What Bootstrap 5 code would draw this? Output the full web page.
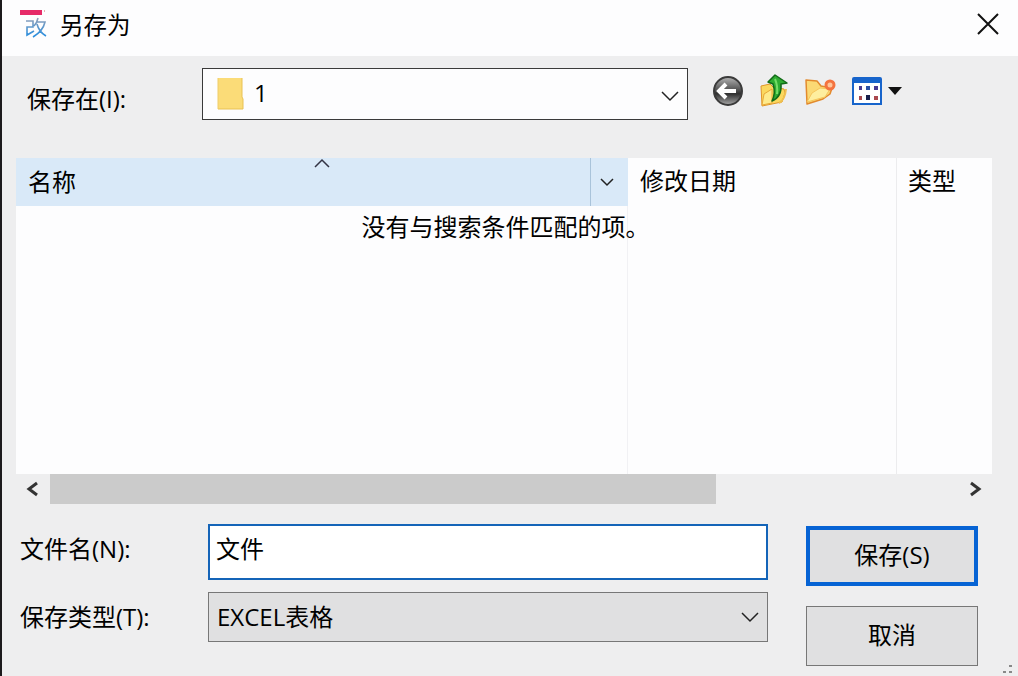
<!DOCTYPE html>
<html lang="zh-CN">
<head>
<meta charset="utf-8">
<meta name="viewport" content="width=device-width, initial-scale=1">
<title>另存为</title>
<link href="https://cdn.jsdelivr.net/npm/bootstrap@5.3.0/dist/css/bootstrap.min.css" rel="stylesheet">
<style>
  body { font-family: "Open Sans", "Noto Sans CJK SC", sans-serif; font-size: 24px; line-height: 32px; color: #000; background: #eeeeef; }
  .dialog { border-left: 2px solid #1c1a1c; }
  .titlebar { height: 56px; background: #fdfdfe; padding: 0 14px 6px 18px; }
  .icon-btn { background: none; border: 0; padding: 0; line-height: 0; color: #111; }
  .place-row { padding: 12px 0 0 25px; }
  .place-label { width: 175px; padding-top: 15px; }
  .place-tools { width: 330px; padding-left: 24px; height: 46px; }
  .win-select { border-radius: 0; font-size: 24px; line-height: 32px; color: #000; border: 1px solid #777;
    background-image: url("data:image/svg+xml,%3Csvg xmlns='http://www.w3.org/2000/svg' viewBox='0 0 18 18'%3E%3Cpath d='M1 5l8 8 8-8' fill='none' stroke='%23222' stroke-width='1.5'/%3E%3C/svg%3E");
    background-position: right 8px center; background-size: 18px 18px; }
  .place-select { height: 52px; padding: 8px 40px 10px 51px; background-color: #fdfdfe; border-color: #3a3a3a; background-position: right 8px top 18px; }
  .folder { left: 15px; top: 9px; }
  .file-area { margin: 38px 26px 0 14px; }
  .file-pane { min-height: 316px; background:
    linear-gradient(#ececee, #ececee) right 95px top / 1px 100% no-repeat,
    linear-gradient(#f1f1f4, #f1f1f4) right 364px top / 1px 100% no-repeat, #fdfdfe; }
  .file-table { table-layout: fixed; width: 100%; }
  .file-table th { height: 48px; font-weight: 400; padding: 0 12px 2px; }
  .file-table .sorted { background: #d9e9f8; padding: 0 0 0 12px; }
  .sort-mark { left: 50%; top: 0; transform: translateX(-50%); line-height: 0; }
  .filter-btn { width: 38px; height: 48px; padding-right: 6px; border-left: 1px solid #a9c3da; }
  .col-date { width: 268px; }
  .col-kind { width: 96px; }
  .empty-note { padding: 5px 0 0 3px; }
  .scroll-row { height: 30px; }
  .scroll-row button { width: 34px; }
  .thumb { background: #cbcbcb; }
  .save-area { padding: 20px 40px 0 18px; gap: 38px; }
  .field-label { width: 188px; }
  .name-label { padding-bottom: 6px; }
  .name-input { height: 56px; border: 2px solid #1464b8; border-radius: 0; padding: 0 6px 10px; font-size: 24px; line-height: 32px; color: #000; background: #fff; }
  .name-input:focus { border-color: #1464b8; box-shadow: none; }
  .type-select { height: 50px; padding: 8px 40px 8px 8px; background-color: #e0e0e1; }
  .actions { width: 172px; padding-top: 2px; gap: 20px; }
  .win-btn { height: 60px; border-radius: 0; font-size: 24px; line-height: 32px; color: #000; background: #e0e0e1; border: 1px solid #777; padding: 0 0 2px; }
  .win-btn.is-default { border: 4px solid #0663d4; }
  .grip { right: 4px; bottom: 0; }
</style>
</head>
<body>
<main class="dialog min-vh-100 position-relative">
  <header class="titlebar d-flex align-items-center">
    <svg width="28" height="30" viewBox="0 0 28 30" aria-hidden="true">
      <defs><linearGradient id="ink" x1="0" y1="0" x2="0" y2="1"><stop offset="0" stop-color="#91a0b8"/><stop offset="1" stop-color="#258de0"/></linearGradient></defs>
      <path d="M0 0h22v5H0z" fill="#e62b68"/><path d="M24 1h1" stroke="#c66"/>
      <path d="M6 11h7v6H7v8l7-4M18 8q-1 5-4 8M17 12h8q-2 9-12 15M17 14q2 8 9 12" fill="none" stroke="url(#ink)" stroke-width="1.6"/>
    </svg>
    <h1 class="h4 fw-normal mb-0 ms-2 ps-1 flex-grow-1">另存为</h1>
    <button type="button" class="icon-btn" aria-label="关闭">
      <svg width="32" height="32" viewBox="0 0 32 32"><path d="M6 5l20 20M26 5L6 25" stroke="#111" stroke-width="2"/></svg>
    </button>
  </header>

  <section class="place-row d-flex">
    <label class="place-label" for="place">保存在(I):</label>
    <div class="position-relative flex-grow-1">
      <select id="place" class="form-select win-select place-select"><option>1</option></select>
      <svg class="folder position-absolute pe-none" width="28" height="34" viewBox="0 0 28 34" aria-hidden="true">
        <path d="M1 1h24v19l1 2v10H1z" fill="#fbdc78"/><path d="M1 32h25V22l-1-2V1" fill="none" stroke="#e9c252"/><path d="M1 1v31" stroke="#efcc68"/>
      </svg>
    </div>
    <div class="place-tools d-flex align-items-center">
      <button type="button" class="icon-btn" aria-label="后退">
        <svg width="32" height="32" viewBox="0 0 32 32">
          <defs><linearGradient id="steel" x1="0" y1="0" x2="0" y2="1"><stop offset="0" stop-color="#b4b4b4"/><stop offset=".45" stop-color="#555"/><stop offset=".6" stop-color="#303030"/><stop offset="1" stop-color="#aaa"/></linearGradient></defs>
          <circle cx="16" cy="16" r="14" fill="url(#steel)" stroke="#3a3a3a" stroke-width="2"/>
          <path d="M14 9l-7 7 7 7M8 16h16" fill="none" stroke="#fff" stroke-width="4"/>
        </svg>
      </button>
      <button type="button" class="icon-btn ms-3" aria-label="向上一级">
        <svg width="28" height="34" viewBox="0 0 28 34">
          <path d="M1 12l9-2 3 3 11 2 1 4-3 9-20 4z" fill="#fbd85f" stroke="#e0962a"/>
          <path d="M2 31l2-11 8-5v14z" fill="#feea8c" stroke="#e8a838"/>
          <path d="M19 29q6-3 7-14" fill="none" stroke="#f0c050" stroke-width="2"/>
          <path d="M15 1L8 8l5 2q3 9-1 17 10-4 9-17l6-1z" fill="#2fac32" stroke="#126b18" stroke-width="1.5" stroke-linejoin="round"/>
          <path d="M15 5q3 7 2 15" fill="none" stroke="#75dc67" stroke-width="2"/>
        </svg>
      </button>
      <button type="button" class="icon-btn ms-3" aria-label="新建文件夹">
        <svg width="32" height="30" viewBox="0 0 32 30">
          <path d="M2 4l11 1 4 5 11 2-2 6-7 5-16 5z" fill="#fbd974" stroke="#e28a2d" stroke-width="1.5" stroke-linejoin="round"/>
          <path d="M3 26l5-9 8-5 10 1-5 8z" fill="#feee9e" stroke="#f5c65c"/>
          <circle cx="26" cy="9" r="4" fill="#ffc59a" stroke="#f4733f" stroke-width="3"/>
        </svg>
      </button>
      <button type="button" class="icon-btn d-flex align-items-center ms-3" aria-label="查看菜单">
        <svg width="30" height="28" viewBox="0 0 30 28">
          <path d="M1 2q0-1 1-1h26q1 0 1 1v25H1z" fill="#fff" stroke="#1764cb" stroke-width="2"/><path d="M1 1h28v5H1z" fill="#1764cb"/>
          <path d="M7 9h3v4H7zM22 9h4v4h-4z" fill="#493a92"/><path d="M14 9h4v4h-4z" fill="#2850a4"/>
          <path d="M7 19h3v4H7zM22 19h4v4h-4z" fill="#aa484e"/><path d="M14 18h4v5h-4z" fill="#17204b"/>
        </svg>
        <svg class="ms-1" width="16" height="8" viewBox="0 0 16 8"><path d="M2 0h14L9 8z" fill="#111"/></svg>
      </button>
    </div>
  </section>

  <section class="file-area">
    <div class="file-pane">
      <table class="file-table">
        <colgroup><col><col class="col-date"><col class="col-kind"></colgroup>
        <thead>
          <tr>
            <th class="sorted position-relative">
              <div class="d-flex align-items-center justify-content-between">名称
                <button type="button" class="icon-btn filter-btn" aria-label="筛选名称"><svg width="16" height="16" viewBox="0 0 16 16"><path d="M2 5l6 6 6-6" fill="none" stroke="#222" stroke-width="1.5"/></svg></button>
              </div>
              <span class="sort-mark position-absolute"><svg width="18" height="10" viewBox="0 0 18 10"><path d="M2 9l7-7 7 7" fill="none" stroke="#334" stroke-width="1.5"/></svg></span>
            </th>
            <th>修改日期</th>
            <th>类型</th>
          </tr>
        </thead>
        <tbody><tr><td colspan="3" class="empty-note text-center">没有与搜索条件匹配的项。</td></tr></tbody>
      </table>
    </div>
    <div class="scroll-row d-flex">
      <button type="button" class="icon-btn" aria-label="向左滚动"><svg width="18" height="16" viewBox="0 0 18 16"><path d="M13 2L5 8l8 6" fill="none" stroke="#333" stroke-width="3"/></svg></button>
      <div class="flex-grow-1 d-flex"><div class="thumb" style="width:73.3%"></div></div>
      <button type="button" class="icon-btn" aria-label="向右滚动"><svg width="18" height="16" viewBox="0 0 18 16"><path d="M5 2l8 6-8 6" fill="none" stroke="#333" stroke-width="3"/></svg></button>
    </div>
  </section>

  <form class="save-area d-flex">
    <div class="flex-grow-1 d-flex flex-column gap-2">
      <div class="d-flex align-items-center">
        <label class="field-label name-label flex-shrink-0" for="fname">文件名(N):</label>
        <input id="fname" type="text" class="form-control name-input" value="文件">
      </div>
      <div class="d-flex align-items-center mt-1">
        <label class="field-label flex-shrink-0" for="ftype">保存类型(T):</label>
        <select id="ftype" class="form-select win-select type-select"><option>EXCEL表格</option></select>
      </div>
    </div>
    <div class="actions d-flex flex-column flex-shrink-0">
      <button type="button" class="btn win-btn is-default">保存(S)</button>
      <button type="button" class="btn win-btn">取消</button>
    </div>
  </form>
  <svg class="grip position-absolute" width="12" height="12" viewBox="0 0 12 12" aria-hidden="true"><path d="M7 1h3v2H7zM1 7h3v2H1zM7 7h3v2H7z" fill="#888"/></svg>
</main>
<script src="https://cdn.jsdelivr.net/npm/bootstrap@5.3.0/dist/js/bootstrap.bundle.min.js"></script>
</body>
</html>
